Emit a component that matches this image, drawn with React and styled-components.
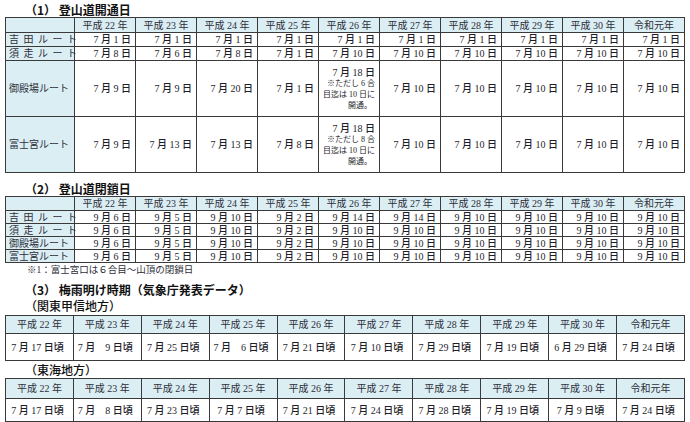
import React from "react";
import styled, { createGlobalStyle } from "styled-components";

const GlobalStyle = createGlobalStyle`
  body {
    margin: 0;
    background: #fff;
    font-family: "Liberation Serif", "Noto Sans CJK JP", serif;
    color: #2e2e3a;
  }
`;

const Page = styled.div`
  width: 690px;
  height: 422px;
  padding: 0 5px;
  box-sizing: border-box;
  overflow: hidden;
`;

const Title = styled.div`
  font-family: "Noto Sans CJK JP", sans-serif;
  font-weight: 700;
  font-size: 12px;
  line-height: 14px;
  height: 14px;
  color: #111;
  margin-left: 20px;
  margin-top: ${(p) => p.$top || 0}px;
`;

const Sub = styled.div`
  font-family: "Noto Sans CJK JP", sans-serif;
  font-weight: 500;
  font-size: 12px;
  line-height: 14px;
  height: 14px;
  color: #111;
  margin-left: 20px;
  margin-top: ${(p) => p.$top || 0}px;
`;

const Note = styled.div`
  font-size: 9.5px;
  line-height: 12px;
  height: 12px;
  margin-left: 22px;
  margin-top: 1px;
`;

const Table = styled.table`
  border-collapse: collapse;
  table-layout: fixed;
  width: ${(p) => p.$width}px;
  margin-top: ${(p) => p.$top || 0}px;
`;

const Head = styled.th`
  background: #dbeef4;
  border: 1px solid #3a3a3a;
  font-weight: 400;
  font-size: 10px;
  line-height: 11px;
  padding: 0;
  height: ${(p) => p.$h}px;
  text-align: center;
  white-space: nowrap;
`;

const Route = styled.td`
  background: #dbeef4;
  border: 1px solid #3a3a3a;
  font-size: 10px;
  line-height: 11px;
  padding: 0 3px;
  height: ${(p) => p.$h}px;
  letter-spacing: ${(p) => (p.$spread ? "4.5px" : "0")};
  white-space: nowrap;
`;

const Cell = styled.td`
  border: 1px solid #3a3a3a;
  font-size: 10px;
  line-height: 11px;
  font-weight: 500;
  color: #1e1e2a;
  padding: 0 4px 0 0;
  height: ${(p) => p.$h}px;
  text-align: ${(p) => p.$align || "right"};
  white-space: nowrap;
  vertical-align: middle;
`;

const Small = styled.div`
  font-size: 8px;
  line-height: 11px;
  font-weight: 400;
`;

const years = [
  "平成 22 年",
  "平成 23 年",
  "平成 24 年",
  "平成 25 年",
  "平成 26 年",
  "平成 27 年",
  "平成 28 年",
  "平成 29 年",
  "平成 30 年",
  "令和元年",
];

const openRows = [
  { name: "吉田ルート", spread: true, h: 13, v: ["7 月 1 日", "7 月 1 日", "7 月 1 日", "7 月 1 日", "7 月 1 日", "7 月 1 日", "7 月 1 日", "7 月 1 日", "7 月 1 日", "7 月 1 日"] },
  { name: "須走ルート", spread: true, h: 13, v: ["7 月 8 日", "7 月 6 日", "7 月 8 日", "7 月 1 日", "7 月 10 日", "7 月 10 日", "7 月 10 日", "7 月 10 日", "7 月 10 日", "7 月 10 日"] },
  { name: "御殿場ルート", h: 55, note: "6", v: ["7 月 9 日", "7 月 9 日", "7 月 20 日", "7 月 1 日", null, "7 月 10 日", "7 月 10 日", "7 月 10 日", "7 月 10 日", "7 月 10 日"] },
  { name: "富士宮ルート", h: 55, note: "8", v: ["7 月 9 日", "7 月 13 日", "7 月 13 日", "7 月 8 日", null, "7 月 10 日", "7 月 10 日", "7 月 10 日", "7 月 10 日", "7 月 10 日"] },
];

const closeRows = [
  { name: "吉田ルート", spread: true, v: ["9 月 6 日", "9 月 5 日", "9 月 10 日", "9 月 2 日", "9 月 14 日", "9 月 14 日", "9 月 10 日", "9 月 10 日", "9 月 10 日", "9 月 10 日"] },
  { name: "須走ルート", spread: true, v: ["9 月 6 日", "9 月 5 日", "9 月 10 日", "9 月 2 日", "9 月 10 日", "9 月 10 日", "9 月 10 日", "9 月 10 日", "9 月 10 日", "9 月 10 日"] },
  { name: "御殿場ルート", v: ["9 月 6 日", "9 月 5 日", "9 月 10 日", "9 月 2 日", "9 月 10 日", "9 月 10 日", "9 月 10 日", "9 月 10 日", "9 月 10 日", "9 月 10 日"] },
  { name: "富士宮ルート", v: ["9 月 6 日", "9 月 5 日", "9 月 10 日", "9 月 2 日", "9 月 10 日", "9 月 10 日", "9 月 10 日", "9 月 10 日", "9 月 10 日", "9 月 10 日"] },
];

const kanto = ["7 月 17 日頃", "7 月　9 日頃", "7 月 25 日頃", "7 月　6 日頃", "7 月 21 日頃", "7 月 10 日頃", "7 月 29 日頃", "7 月 19 日頃", "6 月 29 日頃", "7 月 24 日頃"];
const tokai = ["7 月 17 日頃", "7 月　8 日頃", "7 月 23 日頃", "7 月 7 日頃", "7 月 21 日頃", "7 月 24 日頃", "7 月 28 日頃", "7 月 19 日頃", "7 月 9 日頃", "7 月 24 日頃"];

function RouteTable({ rows, top, headH, rowH }) {
  return (
    <Table $width={679} $top={top}>
      <colgroup>
        <col style={{ width: 69 }} />
        {years.map((y) => (
          <col key={y} style={{ width: 61 }} />
        ))}
      </colgroup>
      <thead>
        <tr>
          <Head $h={headH} />
          {years.map((y) => (
            <Head key={y} $h={headH}>{y}</Head>
          ))}
        </tr>
      </thead>
      <tbody>
        {rows.map((r) => (
          <tr key={r.name}>
            <Route $h={r.h || rowH} $spread={r.spread}>{r.name}</Route>
            {r.v.map((v, i) =>
              v ? (
                <Cell key={i} $h={r.h || rowH}>{v}</Cell>
              ) : (
                <Cell key={i} $h={r.h || rowH}>
                  <div>7 月 18 日</div>
                  <Small>※ただし {r.note} 合</Small>
                  <Small>目迄は 10 日に</Small>
                  <Small style={{ paddingRight: 3 }}>開通。</Small>
                </Cell>
              )
            )}
          </tr>
        ))}
      </tbody>
    </Table>
  );
}

function RainyTable({ values, top, headH, rowH }) {
  return (
    <Table $width={680} $top={top}>
      <thead>
        <tr>
          {years.map((y) => (
            <Head key={y} $h={headH}>{y}</Head>
          ))}
        </tr>
      </thead>
      <tbody>
        <tr>
          {values.map((v, i) => (
            <Cell key={i} $h={rowH} $align="center">{v}</Cell>
          ))}
        </tr>
      </tbody>
    </Table>
  );
}

export default function App() {
  return (
    <>
      <GlobalStyle />
      <Page>
        <Title $top={3}>（1） 登山道開通日</Title>
        <RouteTable rows={openRows} headH={14} rowH={13} />
        <Title $top={9}>（2） 登山道閉鎖日</Title>
        <RouteTable rows={closeRows} headH={13} rowH={12} />
        <Note>※1：富士宮口は６合目～山頂の閉鎖日</Note>
        <Title $top={7}>（3） 梅雨明け時期（気象庁発表データ）</Title>
        <Sub $top={2}>（関東甲信地方）</Sub>
        <RainyTable values={kanto} top={2} headH={17} rowH={26} />
        <Sub $top={2}>（東海地方）</Sub>
        <RainyTable values={tokai} top={1} headH={19} rowH={22} />
      </Page>
    </>
  );
}
